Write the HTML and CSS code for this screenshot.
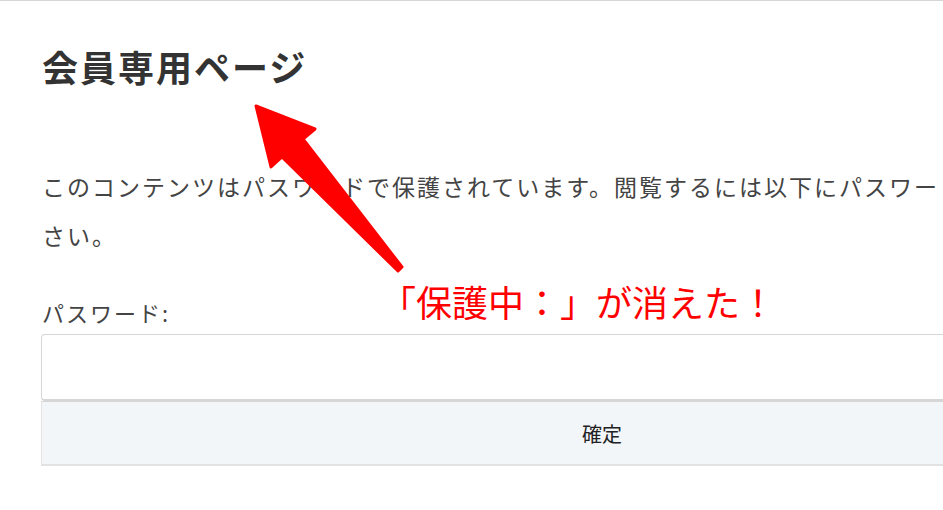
FILE: index.html
```html
<!DOCTYPE html>
<html lang="ja">
<head>
  <meta charset="UTF-8">
  <title>会員専用ページ</title>
  <link rel="stylesheet" href="styles.css">
</head>
<body>

  <div class="page">
    <h1>会員専用ページ</h1>

    <p class="intro">このコンテンツはパスワードで保護されています。閲覧するには以下にパスワードを入力してください。</p>

    <form class="pw-form" onsubmit="return false;">
      <label for="pwd">パスワード:</label>
      <input type="password" id="pwd" name="post_password">
      <button type="submit">確定</button>
    </form>
  </div>

  <!-- annotation on top of the screenshot -->
  <div class="note">「保護中：」が消えた！</div>
  <svg class="arrow" width="943" height="510" viewBox="0 0 943 510">
    <polygon points="256,106 315,129 303,139 402,267 398,271 282,157 271,167"
             fill="#ff0000" stroke="#ff0000" stroke-width="3" stroke-linejoin="round"/>
  </svg>

</body>
</html>
```

FILE: styles.css
```css
html, body {
  margin: 0;
  padding: 0;
}

body {
  font-family: "Noto Sans CJK JP", "Noto Sans", sans-serif;
  background: #fff;
  color: #444;
  border-top: 1px solid #d6d6d6;
  overflow: hidden;
  position: relative;
  height: 509px;
}

.page {
  width: 1122px;
  padding-left: 41px;
}

h1 {
  margin: 40px 0 0 1px;
  font-size: 36px;
  line-height: 51px;
  font-weight: 700;
  letter-spacing: 2px;
  color: #333;
}

.intro {
  max-width: 1108px;
  margin: 70px 0 0 1px;
  font-size: 23px;
  line-height: 49px;
  letter-spacing: 2px;
  color: #444;
}

.pw-form {
  margin-top: 37px;
  display: flex;
  flex-direction: column;
}

.pw-form label {
  margin-left: 1px;
  font-size: 22px;
  line-height: 30px;
  letter-spacing: 2px;
  color: #444;
  margin-bottom: 7px;
}

.pw-form input {
  box-sizing: border-box;
  height: 67px;
  margin: 0;
  border: 1px solid #d6d6d6;
  border-bottom-width: 2px;
  border-radius: 4px;
  background: #fff;
  font-size: 20px;
  padding: 0 14px;
}

.pw-form button {
  box-sizing: border-box;
  height: 65px;
  margin: 0;
  border: 1px solid #e4e4e4;
  border-top: 1px solid #d6d6d6;
  border-bottom: 2px solid #e2e2e2;
  border-radius: 0;
  background: #f3f6f9;
  font-family: "Noto Sans CJK JP", sans-serif;
  font-size: 20px;
  color: #222;
  cursor: pointer;
}

.note {
  position: absolute;
  left: 380px;
  top: 282px;
  font-size: 36px;
  line-height: 36px;
  color: #ff0000;
  white-space: nowrap;
}

.arrow {
  position: absolute;
  left: 0;
  top: -1px;
  pointer-events: none;
}
```
